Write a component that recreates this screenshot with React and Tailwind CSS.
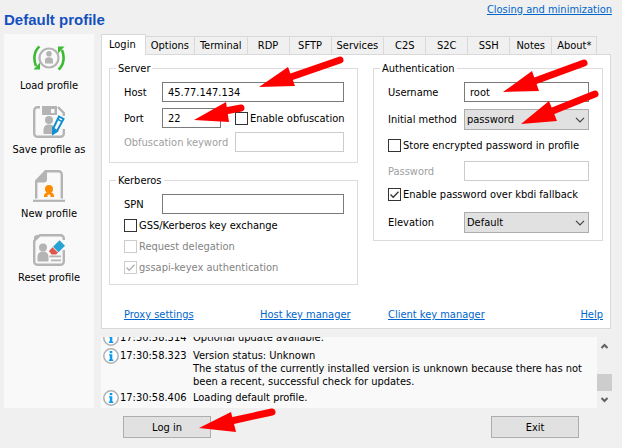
import React, { useState } from 'react';

const TABS = ['Login', 'Options', 'Terminal', 'RDP', 'SFTP', 'Services', 'C2S', 'S2C', 'SSH', 'Notes', 'About*'];

const LOG = [
    { time: '17:30:58.314', lines: ['Optional update available.'] },
    {
        time: '17:30:58.323',
        lines: [
            'Version status: Unknown',
            'The status of the currently installed version is unknown because there has not',
            'been a recent, successful check for updates.',
        ],
    },
    { time: '17:30:58.406', lines: ['Loading default profile.'] },
];

const LoadIcon = () => (
    <svg viewBox="0 0 32 32" className="w-8 h-8" fill="none">
        <circle cx="16" cy="16" r="9.5" stroke="#b4b4b4" strokeWidth="2.2" />
        <circle cx="16" cy="11.800" r="2.800" fill="#b4b4b4" />
        <path d="M12 21.500v-3c0-2 1.500-3.200 4-3.200s4 1.200 4 3.200v3z" fill="#b4b4b4" />
        <path d="M6.500 4.500C1 9 .2 17 3 24" stroke="#3cbb35" strokeWidth="2.600" />
        <path d="M7 20.500v7H.5z" fill="#3cbb35" />
        <path d="M25.500 27.500C31 23 31.800 15 29 8" stroke="#3cbb35" strokeWidth="2.600" />
        <path d="M25 11.500v-7h6.500z" fill="#3cbb35" />
    </svg>
);

const SaveIcon = () => (
    <svg viewBox="0 0 32 32" className="w-8 h-8" fill="none">
        <path d="M7 1.200H4.500A3.300 3.300 0 0 0 1.200 4.500v23a3.300 3.300 0 0 0 3.300 3.300h23a3.300 3.300 0 0 0 3.300-3.300V23M30.800 10V7L25 1.200" stroke="#b4b4b4" strokeWidth="2.4" />
        <path d="M9 0h15v9H9zM18 3v4h3.500V3z" fill="#b4b4b4" fillRule="evenodd" />
        <circle cx="16" cy="14" r="4" fill="#b4b4b4" />
        <path d="M10.500 28v-3.500c0-4 2-6 5.500-6s5 1.500 5 3.500l-2 6z" fill="#b4b4b4" />
        <path d="M26 10.500l4.500 2.500-6.500 12-4 2.500.2-5z" fill="#fff" stroke="#1290d2" strokeWidth="2" />
        <path d="M24.500 13l4.500 2.600M20 22v6l4.500-3z" stroke="#1290d2" fill="#1290d2" strokeWidth="1.500" />
    </svg>
);

const NewIcon = () => (
    <svg viewBox="0 0 32 32" className="w-8 h-8" fill="none">
        <path d="M3.200 28.500V12M12 1.200h13.500a3.300 3.300 0 0 1 3.300 3.300v24" stroke="#b4b4b4" strokeWidth="2.400" />
        <path d="M2 12.500v-2L12 0h2v9.500a3 3 0 0 1-3 3z" fill="#b4b4b4" />
        <path d="M0 30.800h32" stroke="#b4b4b4" strokeWidth="2.200" />
        <circle cx="16" cy="19" r="4" fill="#ff8c00" />
        <path d="M12.200 26.500c0-2 1.500-3.300 3.800-3.300s3.800 1.300 3.800 3.300" stroke="#ff8c00" strokeWidth="2.400" />
        <path d="M11 26h3.500M17.500 26H21" stroke="#ff8c00" strokeWidth="2" />
    </svg>
);

const ResetIcon = () => (
    <svg viewBox="0 0 32 32" className="w-8 h-8" fill="none">
        <path d="M30.800 6V4.500a3.300 3.300 0 0 0-3.300-3.300H7L1.200 7v20.500a3.300 3.300 0 0 0 3.300 3.300h23a3.300 3.300 0 0 0 3.300-3.300V16" stroke="#b4b4b4" strokeWidth="2.400" />
        <path d="M1 8V4a3 3 0 0 1 3-3h4z" fill="#b4b4b4" />
        <circle cx="10" cy="13.500" r="4" fill="#b4b4b4" />
        <path d="M4.500 27.500V23c0-3.500 2-5.500 5.500-5.500s5.500 2 5.500 5.500v4.500z" fill="#b4b4b4" />
        <path d="M26.500 6.200l5.500 5.600-6.500 6.500-5.500-5.600z" fill="#28a4d4" />
        <path d="M19.500 13.200l5.500 5.600-2 1.700h-4.500L16 17z" fill="#e0564a" />
        <path d="M16.500 22.300H28M18 26.300h10" stroke="#b4b4b4" strokeWidth="1.800" />
    </svg>
);

const ACTIONS = [
    { label: 'Load profile', Icon: LoadIcon },
    { label: 'Save profile as', Icon: SaveIcon },
    { label: 'New profile', Icon: NewIcon },
    { label: 'Reset profile', Icon: ResetIcon },
];

const InfoIcon = () => (
    <svg viewBox="0 0 16 16" className="w-4 h-4 shrink-0">
        <circle cx="8" cy="8" r="7.200" fill="#fff" stroke="#b0b0b0" strokeWidth="1.500" />
        <rect x="6.700" y="3" width="2.600" height="2.200" fill="#0f9bf0" />
        <path d="M6 6.300h3.300v5.200h1V13H5.800v-1.500h1V7.500H6z" fill="#0f9bf0" />
    </svg>
);

const Group = ({ title, className = '', children }) => (
    <fieldset className={`min-w-0 border border-[#dcdcdc] pl-3.5 pr-[13px] ${className}`}>
        <legend className="-ml-2 px-0.5">{title}</legend>
        {children}
    </fieldset>
);

const TextBox = ({ className = '', ...props }) => (
    <input
        type="text"
        className={`h-5 min-w-0 border border-[#7a7a7a] bg-white px-[5px] outline-none disabled:border-[#cccccc] ${className}`}
        {...props}
    />
);

const CheckBox = ({ label, disabled, defaultChecked, className = '' }) => (
    <label className={`flex items-center gap-0.5 whitespace-nowrap ${disabled ? 'text-[#838383]' : ''} ${className}`}>
        <span className="relative w-[13px] h-[13px] shrink-0">
            <input
                type="checkbox"
                disabled={disabled}
                defaultChecked={defaultChecked}
                className="peer block appearance-none w-[13px] h-[13px] border border-[#333333] bg-white disabled:border-[#cccccc]"
            />
            <svg viewBox="0 0 13 13" className="absolute inset-0 hidden peer-checked:block pointer-events-none" fill="none">
                <path d="M2.500 6.500l2.700 2.800L10.500 3.800" stroke={disabled ? '#b0b0b0' : '#333333'} strokeWidth="1.300" />
            </svg>
        </span>
        {label}
    </label>
);

const DropDown = ({ id, options }) => (
    <div className="relative flex-1 min-w-0">
        <select id={id} className="block w-full h-[21px] appearance-none rounded-none border border-[#adadad] bg-[#e1e1e1] pl-0.5 pr-5 outline-none">
            {options.map(option => <option key={option}>{option}</option>)}
        </select>
        <svg viewBox="0 0 10 6" className="absolute right-1 top-2 w-2.5 h-1.5 pointer-events-none" fill="none">
            <path d="M1 .8l4 4 4-4" stroke="#444" strokeWidth="1.200" />
        </svg>
    </div>
);

const Link = ({ className = '', children }) => (
    <a href="#" className={`text-[#0066cc] underline whitespace-nowrap ${className}`}>{children}</a>
);

// Red pointers: tip, two head corners, then the shaft
const ARROWS = [
    { head: '259,87 288,67 295,86', shaft: 'M288 78L340 60' },
    { head: '194,120 226,102 229,122', shaft: 'M225 111L241 108' },
    { head: '503,92 532,71 539,91', shaft: 'M532 82L584 63' },
    { head: '521,124 549,101 557,121', shaft: 'M550 112L595 94' },
    { head: '199,428 231,412 236,432', shaft: 'M231 421L272 412' },
];

const Arrows = () => (
    <svg width="622" height="448" className="absolute left-0 top-0 pointer-events-none" aria-hidden="true">
        {ARROWS.map(arrow => (
            <g key={arrow.head}>
                <polygon points={arrow.head} fill="#ff0000" />
                <path d={arrow.shaft} stroke="#ff0000" strokeWidth="7" strokeLinecap="round" />
            </g>
        ))}
    </svg>
);

const App = () => {
    const [tab, setTab] = useState('Login');

    return (
        <div className="relative min-h-screen flex flex-col bg-[#f0f0f0] pl-1 pr-2.5 font-['DejaVu_Sans_Condensed','Noto_Sans',sans-serif] text-[11px] leading-[13px] text-black">
            {/* Header */}
            <header className="flex items-start justify-between pt-[3px] h-[34px]">
                <h1 className="pt-2 font-['Liberation_Sans',Arial,sans-serif] text-[15px] leading-[18px] font-bold text-[#1450be]">
                    Default profile
                </h1>
                <Link>Closing and minimization</Link>
            </header>

            <div className="flex gap-[7px]">
                {/* Profile actions */}
                <nav className="w-[90px] shrink-0 bg-[#f9f9f9] pt-2 flex flex-col gap-3.5">
                    {ACTIONS.map(({ label, Icon }) => (
                        <button key={label} type="button" className="flex flex-col items-center gap-[5px] whitespace-nowrap">
                            <Icon />
                            {label}
                        </button>
                    ))}
                </nav>

                <main className="flex-1 min-w-0">
                    {/* Tabs */}
                    <div role="tablist" className="flex items-end h-5">
                        {TABS.map(name => (
                            <button
                                key={name}
                                type="button"
                                role="tab"
                                aria-selected={tab === name}
                                onClick={() => setTab(name)}
                                className={tab === name
                                    ? 'relative h-[21px] -mb-px pl-[7px] pr-[9px] pb-px border border-b-0 border-[#d9d9d9] bg-white'
                                    : 'h-[18px] min-w-[42px] px-[5px] border-t border-r border-[#d9d9d9]'}
                            >
                                {name}
                            </button>
                        ))}
                    </div>

                    <div role="tabpanel" className="mr-px border border-[#d9d9d9] bg-white px-[7px] pt-[7px] pb-[7px]">
                        <div className="grid grid-cols-[249fr_230fr] items-start gap-[15px]">
                            <div className="min-w-0 flex flex-col gap-[11px]">
                                <Group title="Server" className="pt-[7px] pb-2.5">
                                    <div className="flex items-center">
                                        <label htmlFor="host" className="w-[38px] shrink-0">Host</label>
                                        <TextBox id="host" className="flex-1" defaultValue="45.77.147.134" />
                                    </div>
                                    <div className="flex items-center mt-1.5">
                                        <label htmlFor="port" className="w-[38px] shrink-0">Port</label>
                                        <TextBox id="port" className="w-[59px] shrink-0" defaultValue="22" />
                                        <CheckBox label="Enable obfuscation" className="ml-3.5" />
                                    </div>
                                    <div className="flex items-center mt-1">
                                        <label htmlFor="keyword" className="w-[111px] shrink-0 text-[#a0a0a0]">Obfuscation keyword</label>
                                        <TextBox id="keyword" className="flex-1" disabled />
                                    </div>
                                </Group>

                                <Group title="Kerberos" className="pt-[7px] pb-2.5">
                                    <div className="flex items-center">
                                        <label htmlFor="spn" className="w-[38px] shrink-0">SPN</label>
                                        <TextBox id="spn" className="flex-1" />
                                    </div>
                                    <div className="flex flex-col gap-2 mt-[5px]">
                                        <CheckBox label="GSS/Kerberos key exchange" />
                                        <CheckBox label="Request delegation" disabled />
                                        <CheckBox label="gssapi-keyex authentication" disabled defaultChecked />
                                    </div>
                                </Group>
                            </div>

                            <Group title="Authentication" className="pt-[7px] pb-[7px]">
                                <div className="flex items-center">
                                    <label htmlFor="username" className="w-[76px] shrink-0">Username</label>
                                    <TextBox id="username" className="flex-1" defaultValue="root" />
                                </div>
                                <div className="flex items-center mt-[7px]">
                                    <label htmlFor="method" className="w-[76px] shrink-0">Initial method</label>
                                    <DropDown id="method" options={['password', 'publickey', 'none']} />
                                </div>
                                <CheckBox label="Store encrypted password in profile" className="mt-[9px]" />
                                <div className="flex items-center mt-[9px]">
                                    <label htmlFor="password" className="w-[76px] shrink-0 text-[#a0a0a0]">Password</label>
                                    <TextBox id="password" type="password" className="flex-1" disabled />
                                </div>
                                <CheckBox label="Enable password over kbdi fallback" defaultChecked className="mt-[7px]" />
                                <div className="flex items-center mt-[11px]">
                                    <label htmlFor="elevation" className="w-[76px] shrink-0">Elevation</label>
                                    <DropDown id="elevation" options={['Default', 'Elevated', 'Not elevated']} />
                                </div>
                            </Group>
                        </div>

                        <div className="grid grid-cols-[136fr_128fr_215fr] mt-[23px] pl-[15px]">
                            <div><Link>Proxy settings</Link></div>
                            <div><Link>Host key manager</Link></div>
                            <div className="flex justify-between">
                                <Link>Client key manager</Link>
                                <Link>Help</Link>
                            </div>
                        </div>
                    </div>

                    {/* Log, scrolled to the newest entry */}
                    <div className="flex h-[71px] mt-2">
                        <div className="flex-1 min-w-0 overflow-hidden bg-[#f9f9f9] flex flex-col justify-end gap-0.5 pl-0.5 pb-0.5">
                            {LOG.map(entry => (
                                <div key={entry.time} className="flex shrink-0 gap-px">
                                    <InfoIcon />
                                    <span className="w-[72px] shrink-0 pt-px">{entry.time}</span>
                                    <div className="pt-px whitespace-nowrap">
                                        {entry.lines.map(line => <p key={line}>{line}</p>)}
                                    </div>
                                </div>
                            ))}
                        </div>
                        <div className="w-[15px] shrink-0 flex flex-col items-center">
                            <svg viewBox="0 0 15 17" className="w-[15px] h-[17px]" fill="none">
                                <path d="M4.500 11l3-3 3 3" stroke="#606060" strokeWidth="2" />
                            </svg>
                            <div className="flex-1" />
                            <div className="w-full h-[17px] bg-[#cdcdcd]" />
                            <svg viewBox="0 0 15 17" className="w-[15px] h-[17px]" fill="none">
                                <path d="M4.500 7l3 3 3-3" stroke="#606060" strokeWidth="2" />
                            </svg>
                        </div>
                    </div>
                </main>
            </div>

            {/* Footer */}
            <footer className="flex justify-between pt-2 pl-[119px] pr-[33px]">
                <button type="button" className="w-[88px] h-[22px] border border-[#adadad] bg-[#e1e1e1]">Log in</button>
                <button type="button" className="w-[88px] h-[22px] border border-[#adadad] bg-[#e1e1e1]">Exit</button>
            </footer>

            <Arrows />
        </div>
    );
};

export default App;
